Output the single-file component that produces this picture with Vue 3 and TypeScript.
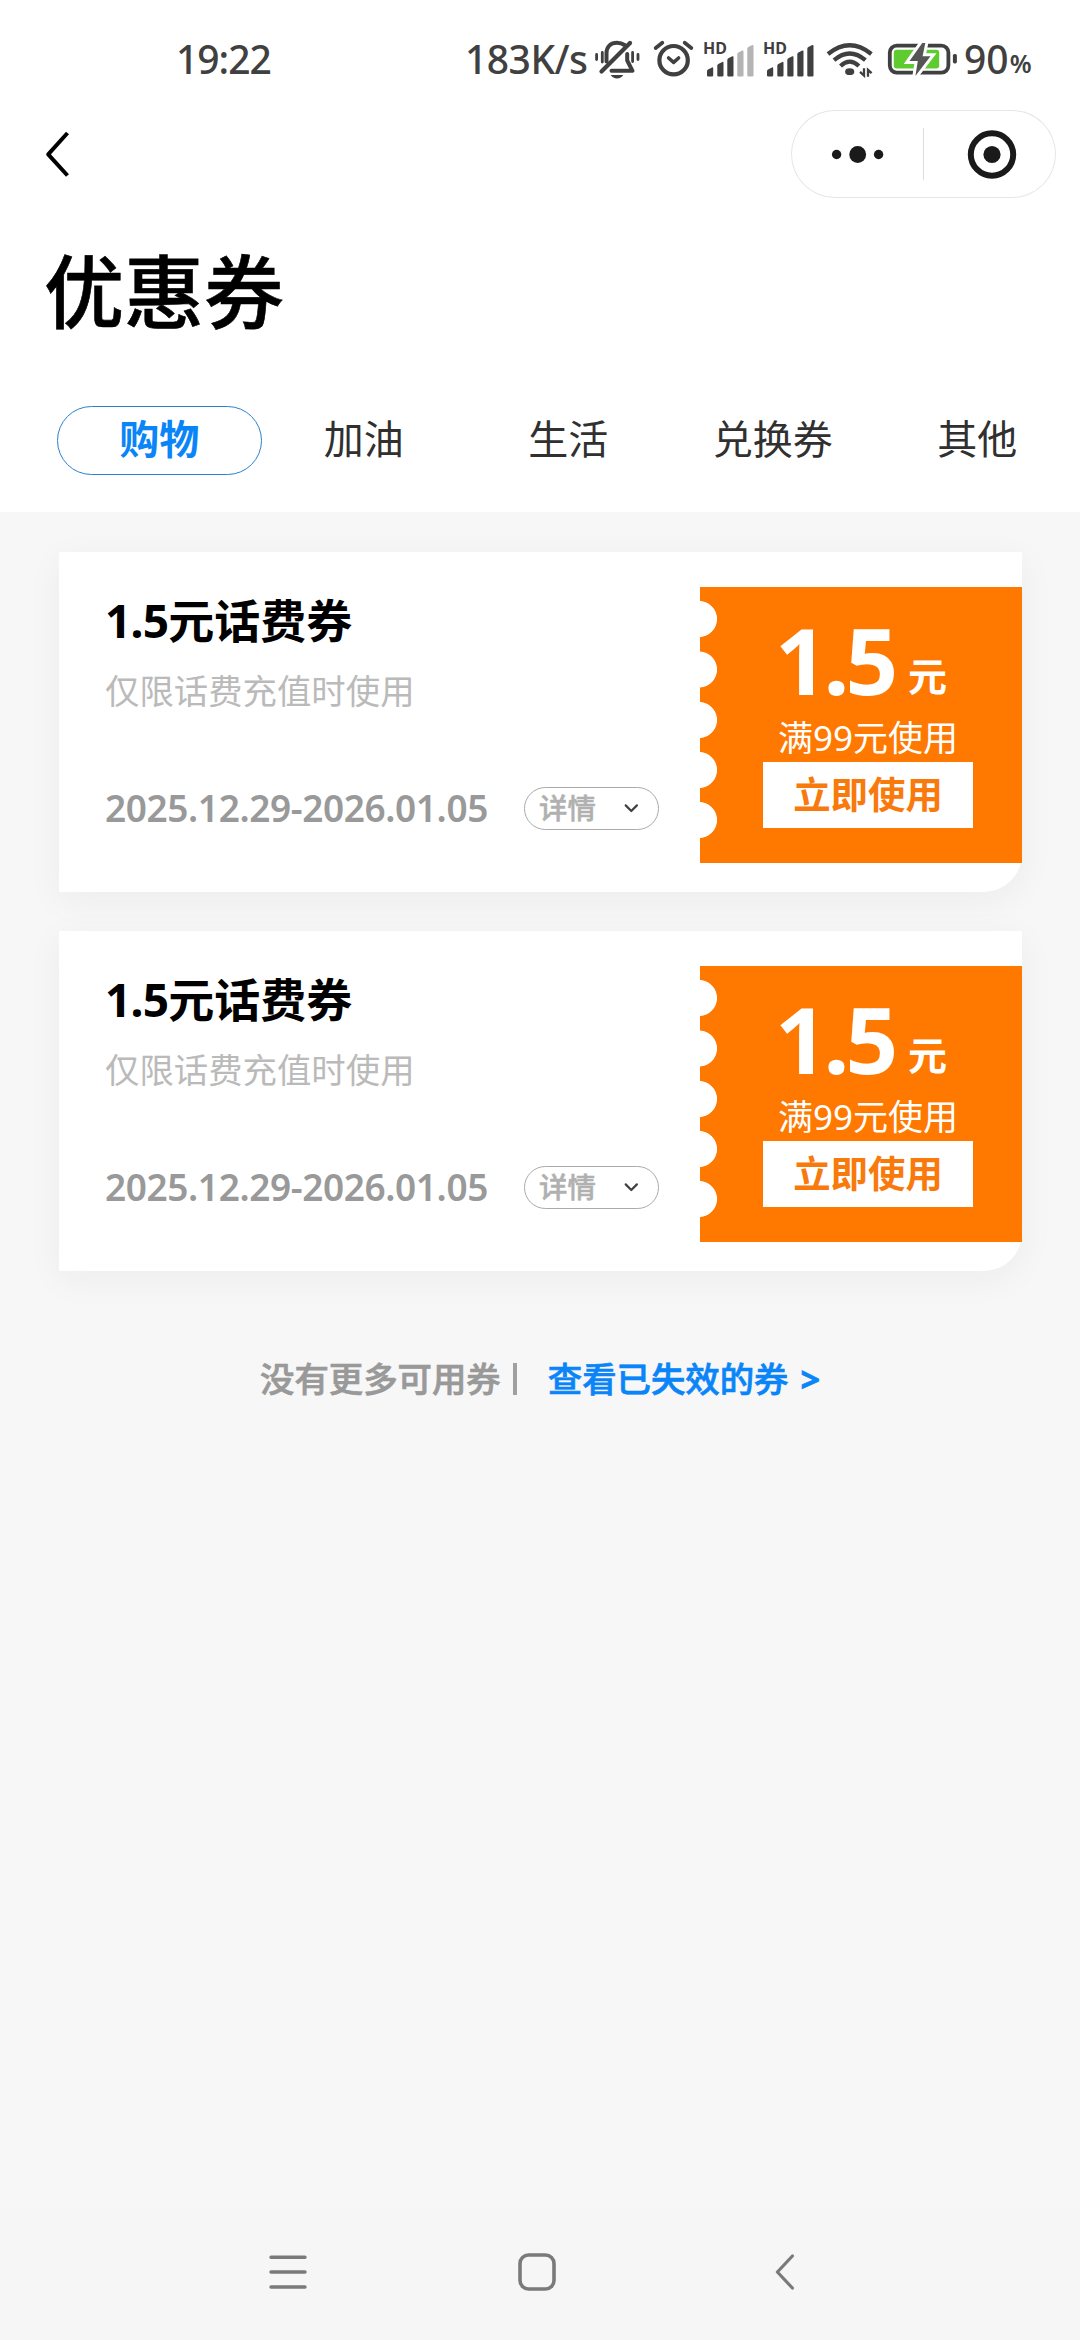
<script setup lang="ts">
interface Coupon {
  id: number
  title: string
  hint: string
  period: string
  amount: string
  condition: string
}

const tabs: string[] = ['购物', '加油', '生活', '兑换券', '其他']
const activeTab = '购物'

const coupons: Coupon[] = [1, 2].map((id) => ({
  id,
  title: '元话费券',
  hint: '仅限话费充值时使用',
  period: '2025.12.29-2026.01.05',
  amount: '1.5',
  condition: '满99元使用',
}))

const signals = [
  { id: 'sim1', level: 3 },
  { id: 'sim2', level: 5 },
]

// Five slanted signal bars, shortest first
const bars: string[] = [
  'M1 29.5V25.2Q1 24 2 23.5L6 21.4Q7.2 21 7.2 22.4V29.5Q7.2 30.5 6 30.5H2.2Q1 30.5 1 29.5Z',
  'M11.3 29.5V19.6Q11.3 18.4 12.3 17.9L16.3 15.9Q17.5 15.5 17.5 16.9V29.5Q17.5 30.5 16.3 30.5H12.5Q11.3 30.5 11.3 29.5Z',
  'M21.3 29.5V14Q21.3 12.8 22.3 12.3L26.3 10.3Q27.5 9.9 27.5 11.3V29.5Q27.5 30.5 26.3 30.5H22.5Q21.3 30.5 21.3 29.5Z',
  'M31.3 29.5V8.2Q31.3 7 32.3 6.5L36.3 4.5Q37.5 4.1 37.5 5.5V29.5Q37.5 30.5 36.3 30.5H32.5Q31.3 30.5 31.3 29.5Z',
  'M41.3 29.5V2.8Q41.3 1.6 42.3 1.1L46.3 -.9Q47.5 -1.3 47.5 .1V29.5Q47.5 30.5 46.3 30.5H42.5Q41.3 30.5 41.3 29.5Z',
]
</script>

<template>
  <div class="page">
    <header class="top">
      <div class="status">
        <span class="clock">19:22</span>
        <span class="speed">183K/s</span>
        <svg class="bell" viewBox="594 38 46 42" width="46" height="42" fill="none" stroke="#404040" stroke-width="3.6" stroke-linecap="round">
          <path d="M606.5 61.5V53.5C606.5 46.5 611 42.8 617 42.8C620 42.8 622.5 43.6 624.5 45" stroke-width="4" />
          <path d="M630 43L601.5 71.5" stroke-width="4.2" />
          <path d="M627.2 54V60.5L632.5 70.8H611.5" stroke-width="4" stroke-linejoin="round" />
          <path d="M596.6 54.5V59.5M602.3 52.5V62M632.6 52.5V61.5M638 54.5V59.5" stroke-width="2.8" />
          <path d="M610.7 75H623.3C621.8 77.4 619.8 78.4 617 78.4S612.2 77.4 610.7 75Z" fill="#404040" stroke="none" />
        </svg>
        <svg class="alarm" viewBox="652 38 43 42" width="43" height="42" fill="none" stroke="#404040" stroke-linecap="round" stroke-linejoin="round">
          <circle cx="673.6" cy="60.2" r="14.2" stroke-width="4.2" />
          <path d="M655.7 48L662.3 42.8M691.3 48L684.7 42.8" stroke-width="3.8" />
          <path d="M668.6 58L673.6 62.4L678.6 58" stroke-width="3.6" />
        </svg>
        <div v-for="s in signals" :key="s.id" class="signal">
          <span class="hd">HD</span>
          <svg viewBox="0 -2 48 34" width="48" height="34">
            <path v-for="(d, i) in bars" :key="i" :d="d" :fill="i < s.level ? '#404040' : '#b4b4b4'" />
          </svg>
        </div>
        <svg class="wifi" viewBox="826 40 48 38" width="48" height="38" fill="none" stroke="#404040" stroke-width="4.2">
          <path d="M828 54Q849.7 36.5 871.4 54" />
          <path d="M834 60.2Q849.7 46.8 865.4 60.2" />
          <path d="M840.5 66Q849.7 57.2 858.9 66" />
          <ellipse cx="849.7" cy="71.7" rx="4.6" ry="3.4" fill="#404040" stroke="none" />
          <path d="M864 68.3V75.5L860 71.8M868 76.8V69.8L871.6 73.2" stroke-width="2.3" />
        </svg>
        <svg class="battery" viewBox="886 40 72 38" width="72" height="38">
          <rect x="889.8" y="45.6" width="58.6" height="27" rx="7" fill="#fff" stroke="#404040" stroke-width="3.8" />
          <rect x="893.8" y="49.8" width="45.4" height="18.6" rx="3" fill="#5ecb2e" />
          <path d="M922.3 43L909.5 61H917.8L915.4 76L930.5 56.2H922.6L925.3 43Z" fill="#555" stroke="#fff" stroke-width="6" paint-order="stroke" />
          <rect x="952.9" y="54" width="4" height="9.4" rx="1.6" fill="#404040" />
        </svg>
        <span class="charge">90</span><span class="percent">%</span>
      </div>

      <nav class="bar">
        <svg class="back" viewBox="0 0 26 48" width="26" height="48" fill="none" stroke="#000" stroke-width="4" stroke-linejoin="round">
          <path d="M22.5 3L3.2 24.3L22.5 45.5" />
        </svg>
        <div class="capsule">
          <svg viewBox="0 0 265 88" width="265" height="88" fill="#1a1a1a">
            <circle cx="45.6" cy="44.5" r="4.7" />
            <circle cx="66.7" cy="44.5" r="8.4" />
            <circle cx="87.6" cy="44.5" r="4.7" />
            <rect x="132" y="18" width="1" height="52" fill="#dcdcdc" />
            <circle cx="201" cy="44.5" r="21.2" fill="none" stroke="#1a1a1a" stroke-width="6" />
            <circle cx="201" cy="44.5" r="8.6" />
          </svg>
        </div>
      </nav>

      <h1 class="heading">优惠券</h1>

      <div class="tabs">
        <div v-for="t in tabs" :key="t" class="tab" :class="{ active: t === activeTab }">{{ t }}</div>
      </div>
    </header>

    <main class="list">
      <article v-for="c in coupons" :key="c.id" class="card">
        <section class="info">
          <h2 class="title"><span class="num">{{ c.amount }}</span>{{ c.title }}</h2>
          <p class="hint">{{ c.hint }}</p>
          <div class="row">
            <span class="period">{{ c.period }}</span>
            <span class="detail">
              详情
              <svg viewBox="0 0 16 12" width="16" height="12" fill="none" stroke="#404040" stroke-width="2.2" stroke-linecap="round" stroke-linejoin="round">
                <path d="M2.7 3.4L8.3 9L13.9 3.4" />
              </svg>
            </span>
          </div>
        </section>
        <section class="stub">
          <div class="price"><span class="amount">{{ c.amount }}</span><span class="unit">元</span></div>
          <div class="cond">{{ c.condition }}</div>
          <div class="use">立即使用</div>
        </section>
      </article>

      <div class="more">
        <span>没有更多可用券</span><i class="rule"></i><a>查看已失效的券<span class="gt">&gt;</span></a>
      </div>
    </main>

    <footer class="sysnav">
      <svg viewBox="0 0 38 36" width="38" height="36" stroke="#7a7a7a" stroke-width="3.4" stroke-linecap="round">
        <path d="M2 3.2H36M2 18H36M2 33H36" />
      </svg>
      <svg class="home" viewBox="0 0 38 38" width="38" height="38" fill="none" stroke="#7a7a7a" stroke-width="3.6">
        <rect x="2" y="2" width="34" height="34" rx="8.5" />
      </svg>
      <svg viewBox="0 0 20 36" width="20" height="36" fill="none" stroke="#7a7a7a" stroke-width="3.2" stroke-linecap="round" stroke-linejoin="round">
        <path d="M17.4 2L2.4 18L17.4 34" />
      </svg>
    </footer>
  </div>
</template>

<style>
body {
  background: #f7f7f7;
}
</style>

<style scoped>
.page {
  width: 1080px;
  height: 2340px;
  display: flex;
  flex-direction: column;
  background: #f7f7f7;
  font-family: "Noto Sans", "Noto Sans CJK SC", sans-serif;
  overflow: hidden;
}
h1, h2, p { margin: 0; }
svg { display: block; flex: none; }

.top {
  height: 512px;
  flex: none;
  background: #fff;
}
.status {
  height: 80px;
  padding-top: 19px;
  box-sizing: border-box;
  display: flex;
  align-items: flex-start;
  color: #404040;
  font-size: 39px;
  line-height: 80px;
  font-weight: 500;
  white-space: nowrap;
}
.clock { width: 289px; margin-left: 176px; letter-spacing: -1px; }
.speed { width: 129px; letter-spacing: -0.5px; }
.bell { margin-top: 19px; }
.alarm { margin: 19px 0 0 12px; }
.signal {
  position: relative;
  width: 48px;
  height: 34px;
  margin: 25px 0 0 11px;
}
.signal + .signal { margin-left: 12px; }
.hd {
  position: absolute;
  left: -3px;
  top: -7px;
  font-size: 16px;
  line-height: 22px;
  font-weight: 700;
}
.wifi { margin: 21px 0 0 12px; }
.battery { margin: 21px 0 0 12px; }
.charge { margin-left: 6px; }
.percent { font-size: 25px; line-height: 88px; margin-left: 1px; font-weight: 600; }

.bar {
  height: 88px;
  margin-top: 30px;
  padding: 0 24px 0 45px;
  display: flex;
  align-items: center;
  justify-content: space-between;
}
.capsule {
  width: 265px;
  height: 88px;
  border-radius: 44px;
  box-shadow: inset 0 0 0 1px #e6e6e6;
}
.heading {
  margin: 34px 0 0 44px;
  font-size: 80px;
  line-height: 118px;
  height: 120px;
  font-weight: 500;
  color: #000;
  -webkit-text-stroke: 0.6px #000;
}
.tabs {
  display: flex;
  margin: 54px 0 0 57px;
}
.tab {
  width: 204.5px;
  height: 69px;
  line-height: 63px;
  box-sizing: border-box;
  border: 1px solid transparent;
  border-radius: 35px;
  text-align: center;
  font-size: 40px;
  color: #303030;
  white-space: nowrap;
}
.tab.active {
  border-color: #2a80d0;
  color: #0a85f8;
  font-weight: 700;
}

.list {
  flex: 1;
  padding: 40px 58px 0 59px;
}
.card {
  display: flex;
  height: 340px;
  margin-bottom: 39px;
  background: #fff;
  border-radius: 0 0 38px 0;
  box-shadow: 0 8px 36px rgba(60, 30, 30, 0.05);
}
.info {
  width: 641px;
  flex: none;
  padding: 37px 0 0 46px;
  box-sizing: border-box;
}
.title {
  font-size: 46px;
  line-height: 62px;
  font-weight: 700;
  color: #000;
}
.num { letter-spacing: -0.8px; }
.hint {
  margin-top: 15px;
  font-size: 34.4px;
  line-height: 50px;
  color: #bababa;
}
.row {
  display: flex;
  align-items: center;
  margin-top: 70px;
  height: 44px;
}
.period {
  width: 419px;
  font-size: 37px;
  line-height: 44px;
  font-weight: 600;
  letter-spacing: -0.4px;
  color: #999;
  white-space: nowrap;
}
.detail {
  width: 135px;
  height: 43px;
  box-sizing: border-box;
  border: 1px solid #aaa;
  border-radius: 22px;
  padding: 0 19px 0 14px;
  display: flex;
  align-items: center;
  justify-content: space-between;
  font-size: 28.4px;
  line-height: 41px;
  font-weight: 500;
  color: #b0b0b0;
  -webkit-text-stroke: 0.5px #b0b0b0;
}
.stub {
  width: 322px;
  height: 276px;
  margin-top: 35px;
  display: flex;
  flex-direction: column;
  align-items: flex-start;
  background-color: #ff7800;
  background-image:
    radial-gradient(circle at -1px 32px, #fff 17.6px, transparent 18.4px),
    radial-gradient(circle at -1px 82.5px, #fff 17.6px, transparent 18.4px),
    radial-gradient(circle at -1px 133px, #fff 17.6px, transparent 18.4px),
    radial-gradient(circle at -1px 183px, #fff 17.6px, transparent 18.4px),
    radial-gradient(circle at -1px 233px, #fff 17.6px, transparent 18.4px);
  color: #fff;
}
.price {
  height: 110px;
  padding: 18px 0 0 75px;
  display: flex;
  align-items: flex-start;
  font-weight: 700;
}
.amount { font-size: 92px; letter-spacing: -4px; line-height: 110px; }
.unit { font-size: 39px; margin: 46px 0 0 14px; line-height: 50px; }
.cond {
  height: 47px;
  padding-left: 78px;
  font-size: 35px;
  line-height: 46px;
  white-space: nowrap;
}
.use {
  width: 210px;
  height: 66px;
  margin-left: 63px;
  background: #fff;
  color: #f97a0c;
  font-size: 37.4px;
  line-height: 65px;
  font-weight: 700;
  text-align: center;
}
.more {
  display: flex;
  align-items: center;
  margin-top: 86px;
  padding-left: 201px;
  height: 44px;
  font-size: 34.4px;
  line-height: 44px;
  font-weight: 500;
  color: #999;
  -webkit-text-stroke: 0.7px currentColor;
}
.rule {
  width: 4px;
  height: 32px;
  margin: 0 31px 0 12px;
  background: #a0a0a0;
}
.more a { color: #0a85f8; }
.gt { margin-left: 12px; font-weight: 700; }

.sysnav {
  height: 131px;
  flex: none;
  display: flex;
  padding: 0 0 5px 269px;
  box-sizing: border-box;
  align-items: center;
  background: #f6f6f6;
}
.home { margin: 0 219px 0 211px; }
</style>
